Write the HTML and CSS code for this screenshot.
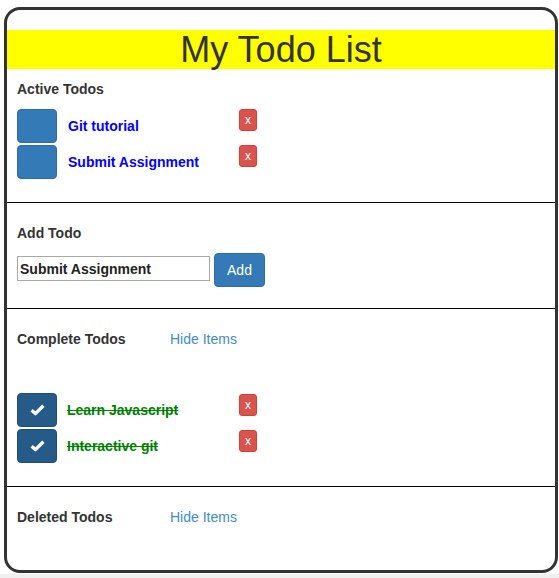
FILE: index.html
```html
<!DOCTYPE html>
<html>
<head>
<meta charset="utf-8">
<link rel="stylesheet" href="styles.css">
</head>
<body>
<div class="card">
  <h1 class="title">My Todo List</h1>

  <section class="section section-first">
    <div class="label-row"><span class="label">Active Todos</span></div>
    <div class="list">
      <div class="item">
        <button class="check check-open"></button>
        <span class="todo todo-active">Git tutorial</span>
        <button class="del">x</button>
      </div>
      <div class="item">
        <button class="check check-open"></button>
        <span class="todo todo-active">Submit Assignment</span>
        <button class="del">x</button>
      </div>
    </div>
  </section>
  <hr class="rule rule-a">

  <section class="section">
    <div class="label-row"><span class="label">Add Todo</span></div>
    <div class="form">
      <input class="field" type="text" value="Submit Assignment">
      <button class="add">Add</button>
    </div>
  </section>
  <hr class="rule rule-b">

  <section class="section">
    <div class="label-row"><span class="label">Complete Todos</span><span class="link">Hide Items</span></div>
    <div class="list list-complete">
      <div class="item">
        <button class="check check-done"><svg width="15" height="12" viewBox="0 0 15 12"><path d="M1.6 6.2 L5.4 9.6 L13.4 1.8" fill="none" stroke="#fff" stroke-width="3.4" stroke-linejoin="round"/></svg></button>
        <span class="todo todo-done">Learn Javascript</span>
        <button class="del">x</button>
      </div>
      <div class="item">
        <button class="check check-done"><svg width="15" height="12" viewBox="0 0 15 12"><path d="M1.6 6.2 L5.4 9.6 L13.4 1.8" fill="none" stroke="#fff" stroke-width="3.4" stroke-linejoin="round"/></svg></button>
        <span class="todo todo-done">Interactive git</span>
        <button class="del">x</button>
      </div>
    </div>
  </section>
  <hr class="rule rule-a">

  <section class="section">
    <div class="label-row"><span class="label">Deleted Todos</span><span class="link">Hide Items</span></div>
  </section>
</div>
<div class="strip"></div>
</body>
</html>
```

FILE: styles.css
```css
html, body {
  margin: 0;
  padding: 0;
  background: #fff;
}
body {
  font-family: "Liberation Sans", Arial, sans-serif;
  font-size: 14px;
  color: #333;
  width: 559px;
  height: 578px;
  overflow: hidden;
}
.card {
  box-sizing: border-box;
  margin: 7px 1px 1px 4px;
  height: 566px;
  border: 3px solid #333;
  border-radius: 16px;
  overflow: hidden;
}
.title {
  margin: 20px 0 0;
  height: 39px;
  line-height: 39px;
  background: #ffff00;
  color: #333;
  font-size: 36px;
  font-weight: normal;
  text-align: center;
}
.section {
  padding: 20px 10px 0;
}
.section-first {
  padding-top: 10px;
}
.label-row {
  display: flex;
  height: 20px;
  line-height: 20px;
}
.label {
  width: 153px;
  font-weight: bold;
  font-size: 14px;
  color: #333;
}
.link {
  color: #428bca;
  font-size: 14px;
}
.list {
  margin-top: 10px;
  display: flex;
  flex-direction: column;
  gap: 2px;
}
.list-complete {
  margin-top: 44px;
}
.item {
  display: flex;
  align-items: flex-start;
}
.check {
  box-sizing: border-box;
  width: 40px;
  height: 34px;
  padding: 0;
  border-radius: 4px;
  display: flex;
  align-items: center;
  justify-content: center;
  cursor: pointer;
}
.check-open {
  background: #337ab7;
  border: 1px solid #2e6da4;
}
.check-done {
  background: #265a88;
  border: 1px solid #204d74;
}
.check svg {
  display: block;
  margin-left: 1px;
}
.todo {
  width: 171px;
  padding-left: 11px;
  height: 34px;
  line-height: 34px;
  font-weight: bold;
  font-size: 14px;
  white-space: nowrap;
}
.todo-active {
  color: #0000ff;
}
.todo-done {
  color: #008000;
  text-decoration: line-through;
  padding-left: 10px;
  width: 172px;
}
.del {
  box-sizing: border-box;
  width: 18px;
  height: 22px;
  padding: 0;
  margin-top: 1px;
  background: #d9534f;
  border: 1px solid #d43f3a;
  border-radius: 3px;
  color: #fff;
  font-family: "Liberation Sans", Arial, sans-serif;
  font-size: 12px;
  line-height: 18px;
}
.section-first .del {
  margin-top: 0;
}
.rule {
  margin: 0;
  border: 0;
  border-top: 1px solid #000;
  height: 0;
}
.rule-a {
  margin-top: 23px;
}
.rule-b {
  margin-top: 21px;
}
.form {
  margin-top: 10px;
  display: flex;
  align-items: flex-start;
  gap: 4px;
}
.field {
  box-sizing: border-box;
  width: 193px;
  height: 25px;
  margin: 3px 0 0;
  padding: 1px 2px;
  border: 1px solid #a9a9a9;
  font-family: "Liberation Sans", Arial, sans-serif;
  font-size: 14px;
  font-weight: bold;
  color: #222;
}
.add {
  box-sizing: border-box;
  width: 51px;
  height: 34px;
  padding: 0;
  background: #337ab7;
  border: 1px solid #2e6da4;
  border-radius: 4px;
  color: #fff;
  font-family: "Liberation Sans", Arial, sans-serif;
  font-size: 14px;
}
.strip {
  height: 4px;
  background: #f0f0f0;
}
```
